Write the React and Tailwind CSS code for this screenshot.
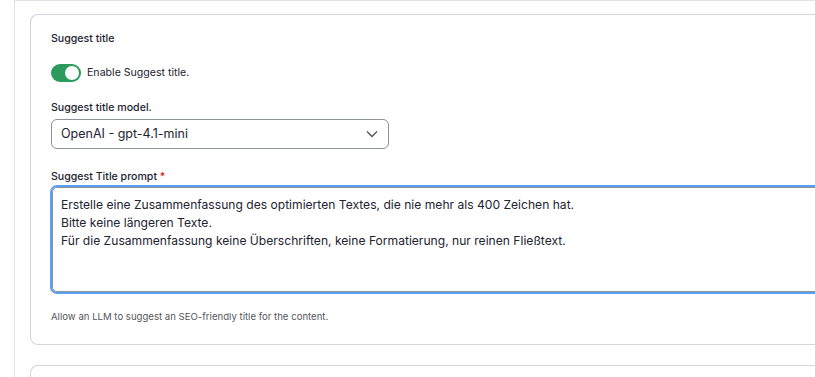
import React from "react";

export default function App() {
  return (
    <div className="w-[815px] h-[377px] overflow-hidden bg-white" style={{ fontFamily: "Inter, 'Noto Sans', sans-serif" }}>
      <div className="ml-[14px] h-full border-l border-t border-[#e3e3e6] pl-[15px] pt-[13px]">
        <div className="w-[820px] rounded-l-[8px] border border-r-0 border-[#d3d4d9] pl-[20px] pt-[15px] pb-[20px]">
          <div className="text-[10.6px] leading-[18px] font-medium text-[#222330]">Suggest title</div>

          <div className="mt-[16px] flex items-center h-[18px]">
            <div className="w-[30px] h-[18px] rounded-full bg-[#2a9b5d] flex items-center justify-end pr-[2px]">
              <div className="w-[14px] h-[14px] rounded-full bg-white" />
            </div>
            <span className="ml-[6px] text-[10.6px] text-[#222330]">Enable Suggest title.</span>
          </div>

          <div className="mt-[17px] text-[10.6px] leading-[18px] font-medium text-[#222330]">Suggest title model.</div>

          <div className="mt-[2px] w-[338px] h-[30px] rounded-[6px] border border-[#8e929c] flex items-center justify-between pl-[9px] pr-[10px]">
            <span className="text-[12.5px] text-[#222330]">OpenAI - gpt-4.1-mini</span>
            <svg width="12" height="8" viewBox="0 0 12 8" fill="none">
              <path d="M1 1.5 L6 6.5 L11 1.5" stroke="#545560" strokeWidth="1.4" />
            </svg>
          </div>

          <div className="mt-[19px] text-[10.6px] leading-[18px] font-medium text-[#222330]">
            Suggest Title prompt <span className="text-[#d72222]">*</span>
          </div>

          <div className="-mt-[1px] -ml-[1px] h-[109px] rounded-[7px] border-2 border-[#5b9ff0]">
            <div className="h-full rounded-[5px] border border-[#8e929c] pl-[8px] pt-[8px] text-[12.1px] leading-[18px] text-[#222330]">
              <div>Erstelle eine Zusammenfassung des optimierten Textes, die nie mehr als 400 Zeichen hat.</div>
              <div>Bitte keine längeren Texte.</div>
              <div>Für die Zusammenfassung keine Überschriften, keine Formatierung, nur reinen Fließtext.</div>
            </div>
          </div>

          <div className="mt-[16px] text-[9.6px] leading-[14px] text-[#55565b]">
            Allow an LLM to suggest an SEO-friendly title for the content.
          </div>
        </div>
        <div className="mt-[20px] w-[820px] h-[40px] rounded-l-[8px] border border-r-0 border-[#d3d4d9]" />
      </div>
    </div>
  );
}
